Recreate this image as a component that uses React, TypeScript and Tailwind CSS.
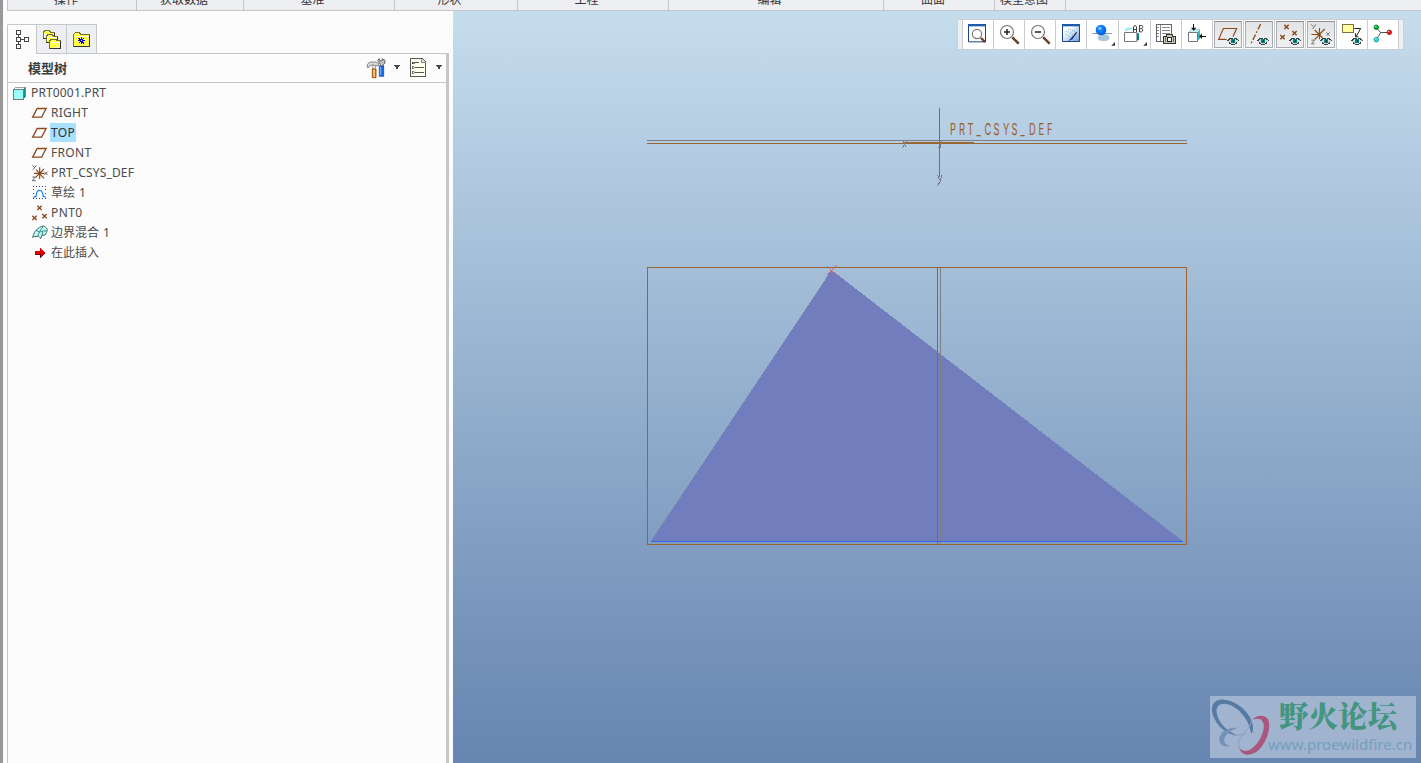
import React from 'react';

const UI = 'font-["Noto_Sans","Noto_Sans_CJK_SC",sans-serif]';

type IconProps = { box: string; w: number; h: number; children: React.ReactNode; smooth?: boolean };

function Icon({ box, w, h, children, smooth }: IconProps) {
  return (
    <svg width={w} height={h} viewBox={box} fill="none" className="block shrink-0" shapeRendering={smooth ? 'auto' : 'crispEdges'}>
      {children}
    </svg>
  );
}

const groups = [
  { label: '操作', cls: 'w-[129px] pr-[12px]' },
  { label: '获取数据', cls: 'w-[107px] pr-[12px]' },
  { label: '基准', cls: 'w-[151px] pr-[13px]' },
  { label: '形状', cls: 'w-[123px] pr-[13px]' },
  { label: '工程', cls: 'w-[151px] pr-[13px]' },
  { label: '编辑', cls: 'w-[215px] pr-[13px]' },
  { label: '曲面', cls: 'w-[111px] pr-[12px]' },
  { label: '模型意图', cls: 'w-[71px] pr-[12px]' },
];

function Ribbon() {
  return (
    <div className="ml-1 flex h-[11px] shrink-0 overflow-hidden border-b border-l border-[#c5c8cb] bg-[#eeeff2]">
      {groups.map((g) => (
        <div key={g.label} className={`${g.cls} flex h-[10px] shrink-0 justify-center overflow-hidden border-r border-[#c5c8cb]`}>
          <span className="-mt-[9px] whitespace-nowrap text-[12px] leading-[17px] text-[#333]">{g.label}</span>
        </div>
      ))}
    </div>
  );
}

function Caret() {
  return (
    <Icon box="0 0 6 4" w={6} h={4}>
      <path d="M0 0H6V1H5V2H4V4H2V2H1V1H0Z" fill="#444" />
    </Icon>
  );
}

function Folder({ x, y, w, h }: { x: number; y: number; w: number; h: number }) {
  return (
    <g>
      <path d={`M${x} ${y + h}V${y + 5}l5 -5h12l5 5h${w - 22}V${y + h}Z`} fill="#ffff45" stroke="#77713f" strokeWidth="3" />
      <path d={`M${x + 4} ${y + h - 3}V${y + 10}H${x + w - 3}`} stroke="#fff" strokeWidth="3" />
      <path d={`M${x} ${y + h}H${x + w}V${y + 7}`} stroke="#333" strokeWidth="3" />
    </g>
  );
}

function Tabs() {
  return (
    <div className="flex h-[30px] w-[442px] items-end">
      <div className="flex h-[30px] w-[29px] items-center justify-center rounded-tl-[2px] border-l border-t border-[#c5c8cb] bg-[#fcfcfc]">
        <Icon box="45 84 45 63" w={15} h={21}>
          <path d="M50 89h12v12H50zM50 110h12v12H50zM50 131h12v12H50zM73 110h12v12H73zM56 101v9M56 122v9M62 116h11" stroke="#444" strokeWidth="3" />
        </Icon>
      </div>
      <div className="flex h-[30px] w-[31px] items-center justify-center border border-[#c5c8cb] bg-[#eeeff2]">
        <Icon box="126 84 60 63" w={20} h={21}>
          <Folder x={130} y={89} w={34} h={24} />
          <Folder x={139} y={100} w={34} h={24} />
          <Folder x={149} y={114} w={33} h={28} />
          <path d="M158 132h3m3 -3h3m3 3h3m3 -3h3m-18 9h3m3 -3h3m3 3h3" stroke="#fffccc" strokeWidth="3" />
        </Icon>
      </div>
      <div className="flex h-[30px] w-[30px] items-center justify-center border-y border-r border-[#c5c8cb] bg-[#eeeff2]">
        <Icon box="216 90 57 54" w={19} h={18}>
          <Folder x={221} y={98} w={48} h={42} />
          <path d="M244 111v21M233 122h22M236 114l16 16M252 114l-16 16" stroke="#0000d0" strokeWidth="3" />
          <path d="M243 120h3v3h-3z" fill="#ffff55" />
        </Icon>
      </div>
      <div className="h-px flex-1 bg-[#c5c8cb]" />
    </div>
  );
}

function TreeHeader() {
  return (
    <div className="flex h-[30px] items-center border-b border-[#c5c8cb] pl-5 pr-[4px]">
      <span className="flex-1 pt-px text-[13px] font-bold leading-none text-[#3c3c3c]">模型树</span>
      <Icon box="378 168 63 69" w={21} h={23} smooth>
        <path d="M382 202v-9l8-7h18l8 4v7h-13l-4-2-8 1-4 6z" fill="#d8dadb" stroke="#555" strokeWidth="2" />
        <path d="M398 196h9v12h-9z" fill="#eee" stroke="#777" strokeWidth="2" />
        <path d="M397 207h11v26h-11z" fill="#f08a20" stroke="#8a3c10" strokeWidth="2.500" />
        <path d="M402 209v22" stroke="#fff0a0" strokeWidth="3" />
        <path d="M413 180l5-4 2 7 7-1-1-6 9 5v8l-5 5v8h-9v-9z" fill="#bfc2c2" stroke="#505454" strokeWidth="2.500" />
        <path d="M418 198h13v31h-13z" fill="#1765e8" stroke="#173d82" strokeWidth="2" />
        <path d="M422 200v26" stroke="#78bdff" strokeWidth="3" />
      </Icon>
      <div className="ml-[7px] mt-[-1px]"><Caret /></div>
      <div className="ml-[9px]">
        <Icon box="507 171 54 63" w={18} h={21}>
          <path d="M512 176h34l11 11v43h-45z" fill="#fffff0" stroke="#555b50" strokeWidth="3" />
          <path d="M545 176v12h12" fill="#ddd" stroke="#555b50" strokeWidth="2" />
          <path d="M526 188h12M526 203h25M526 218h25" stroke="#555" strokeWidth="3" />
          <path d="M517 186h5v5h-5zM517 200h5v5h-5zM517 215h5v5h-5z" stroke="#333" strokeWidth="2" />
        </Icon>
      </div>
      <div className="ml-[9px] mt-[-1px]"><Caret /></div>
    </div>
  );
}

const treeIcons: Record<string, React.ReactNode> = {
  plane: (
    <Icon box="93 69 54 57" w={18} h={19} smooth>
      <path d="M98 111.500h27l13.500 -26h-27z" stroke="#8c4a1c" strokeWidth="4" />
    </Icon>
  ),
  csys: (
    <Icon box="93 249 54 57" w={18} h={19} smooth>
      <path d="M119 262v35M102 280h31M108 269l24 26M132 267l-26 26" stroke="#8c4a1c" strokeWidth="3.500" />
      <path d="M97 256l6 6M109 256l-10 13M133 275l10 10M143 275l-10 10M97 291h9l-9 11h10" stroke="#666" strokeWidth="3" />
    </Icon>
  ),
  sketch: (
    <Icon box="93 309 54 57" w={18} h={19}>
      <path d="M99 319.500h42M99 355.500h42" stroke="#203a90" strokeWidth="3" strokeDasharray="3 6" />
      <path d="M100.500 327v24M136.500 327v24" stroke="#203a90" strokeWidth="3" strokeDasharray="3 9" />
      <path d="M100 352l8-3c2-24 19-24 22 0l7 3" stroke="#0878e8" strokeWidth="3.500" shapeRendering="auto" />
    </Icon>
  ),
  points: (
    <Icon box="93 369 54 57" w={18} h={19} smooth>
      <path d="M112 377l13 13M125 377l-13 13M97 407l13 13M110 407l-13 13M127 402l13 13M140 402l-13 13" stroke="#8c4a1c" strokeWidth="4" />
    </Icon>
  ),
  blend: (
    <Icon box="93 429 54 57" w={18} h={19} smooth>
      <path d="M98 472c3-11 6-18 11-22 6-5 12-11 21-12 5 1 9 5 12 10-1 6-3 12-7 17l-9 1-4 10c-3-5-6-8-10-7-5 0-10 1-14 3z" fill="#c0f8f4" stroke="#386f6f" strokeWidth="3" />
      <path d="M108 451l10 5 12-17M118 456l-5 13M119 456c8-3 15-4 22-3M128 454l-2 12" stroke="#287b7b" strokeWidth="2.500" />
    </Icon>
  ),
  insert: (
    <Icon box="93 489 54 57" w={18} h={19}>
      <path d="M105 514h15v-12l15 16-15 17v-11h-15z" fill="#e80000" />
      <path d="M105 523h15v11l15-15" stroke="#700" strokeWidth="3" />
    </Icon>
  ),
};

const tree = [
  { icon: 'plane', label: 'RIGHT', size: 'text-[12px] tracking-[0.25px]' },
  { icon: 'plane', label: 'TOP', size: 'text-[12px] tracking-[0.3px]', selected: true },
  { icon: 'plane', label: 'FRONT', size: 'text-[12px] tracking-[0.3px]' },
  { icon: 'csys', label: 'PRT_CSYS_DEF', size: 'text-[12px] tracking-[0.15px]' },
  { icon: 'sketch', label: '草绘 1', size: 'text-[12px] [word-spacing:1px]' },
  { icon: 'points', label: 'PNT0', size: 'text-[12px] tracking-[0.4px]' },
  { icon: 'blend', label: '边界混合 1', size: 'text-[12px] [word-spacing:1px]' },
  { icon: 'insert', label: '在此插入', size: 'text-[12px]' },
];

function ModelTree() {
  return (
    <div className="flex flex-col text-[#4a4a4a]">
      <div className="flex h-5 items-center pl-1">
        <Icon box="36 18 45 42" w={15} h={14}>
          <path d="M70 28l6-6v29l-6 6z" fill="#0c8f8f" stroke="#355" strokeWidth="2" />
          <path d="M40 28l7-6h29l-6 6z" fill="#e0ffff" stroke="#777" strokeWidth="2" />
          <path d="M40.500 27.500h30v30h-30z" fill="#98ffff" stroke="#777" strokeWidth="3" />
        </Icon>
        <span className="ml-1 text-[12px] leading-5 tracking-[0.15px]">PRT0001.PRT</span>
      </div>
      {tree.map((n) => (
        <div key={n.label} className="flex h-5 items-start pl-[23px]">
          {treeIcons[n.icon]}
          <span className={`${n.size} ml-px h-[19px] px-px leading-[19px] ${n.selected ? 'bg-[#a8e0ff] text-[#333]' : ''}`}>{n.label}</span>
        </div>
      ))}
    </div>
  );
}

function Eye({ x, y }: { x: number; y: number }) {
  return (
    <g transform={`translate(${x} ${y})`}>
      <path d="M-16 0l7-7h18l7 7-7 8H-9z" fill="#d5dad8" />
      <path d="M-16 0l7-7h18l7 7M-12 5l5 4H7l5-4" stroke="#3c4543" strokeWidth="3" strokeDasharray="6 1" />
      <path d="M-5-6H6V6H-5z" fill="#07817d" />
      <path d="M-1-2h4v4h-4z" fill="#033" />
    </g>
  );
}

function Magnifier({ sign }: { sign: string }) {
  return (
    <g>
      <path d="M187 82l19 19" stroke="#502818" strokeWidth="7" />
      <path d="M189 83l16 16" stroke="#a45a3a" strokeWidth="3" />
      <circle cx="171" cy="66" r="19.500" fill="#fcfcfc" stroke="#777" strokeWidth="3.5" />
      <path d={sign} stroke="#222" strokeWidth="4.5" />
    </g>
  );
}

const brown = '#8c4a1c';

const tools: { id: string; cls: string; on?: boolean; art: React.ReactNode }[] = [
  {
    id: 'refit', cls: 'w-[31px]',
    art: (
      <Icon box="36 27 93 90" w={31} h={30} smooth>
        <path d="M55.500 43.500h51v52h-51z" fill="#fff" stroke="#184488" strokeWidth="3" />
        <path d="M54 42h54v7H54z" fill="#1d5aa8" />
        <path d="M93 84l12 12" stroke="#502818" strokeWidth="7" />
        <path d="M94 84l10 10" stroke="#a45a3a" strokeWidth="3" />
        <circle cx="81" cy="72" r="14" fill="#fff" stroke="#777" strokeWidth="3.500" />
      </Icon>
    ),
  },
  { id: 'in', cls: 'w-[31px]', art: <Icon box="129 27 93 90" w={31} h={30} smooth><Magnifier sign="M162 66h18M171 57v18" /></Icon> },
  { id: 'out', cls: 'w-[31px]', art: <Icon box="129 27 93 90" w={31} h={30} smooth><Magnifier sign="M162 66h18" /></Icon> },
  {
    id: 'repaint', cls: 'w-[31px]',
    art: (
      <Icon box="315 27 93 90" w={31} h={30} smooth>
        <defs>
          <linearGradient id="rp" x1="0" y1="0" x2="1" y2="1"><stop offset=".3" stopColor="#fff" /><stop offset="1" stopColor="#6c9ee0" /></linearGradient>
        </defs>
        <path d="M337.500 43.500h51v51h-51z" fill="url(#rp)" stroke="#184488" strokeWidth="3" />
        <path d="M336 42h54v7h-54z" fill="#1d5aa8" />
        <path d="M380 67l-14 18" stroke="#224" strokeWidth="3.500" />
        <path d="M369 78l-15 16 15-7z" fill="#112d9a" />
        <path d="M347 64c10 1 17 5 22 11M346 73c7 1 12 4 15 9M353 57c10 1 18 5 23 10" stroke="#5ab" strokeWidth="2.500" strokeDasharray="3 4" />
      </Icon>
    ),
  },
  {
    id: 'style', cls: 'w-[32px]',
    art: (
      <Icon box="408 27 96 90" w={32} h={30} smooth>
        <defs>
          <radialGradient id="ball" cx=".4" cy=".35" r=".7"><stop offset="0" stopColor="#b9e2ff" /><stop offset=".3" stopColor="#1284ff" /><stop offset="1" stopColor="#0058dd" /></radialGradient>
        </defs>
        <ellipse cx="461" cy="83" rx="18" ry="11" fill="#a9c6e0" />
        <path d="M427 70.500h59" stroke="#8898a8" strokeWidth="3" />
        <circle cx="453" cy="60" r="16" fill="url(#ball)" />
        <path d="M495 96v11h-11z" fill="#333" />
      </Icon>
    ),
  },
  {
    id: 'saved', cls: 'w-[32px]',
    art: (
      <Icon box="504 27 96 90" w={32} h={30} smooth>
        <path d="M526 63l7-7h14" stroke="#7ee" strokeWidth="5" />
        <path d="M523.500 94.500V67.500h37v27z" fill="#fff" stroke="#777" strokeWidth="3" />
        <path d="M564 91V70" stroke="#088" strokeWidth="6" />
        <path d="M550.500 66V51l3-4h3l3 4v15M550 58.500h9M568.500 46v20M568 46.500h8l2 3v4l-3 2.500h-6M575 56l3 3v4l-3 2.500h-7" stroke="#333" strokeWidth="2.800" />
        <path d="M591 96v11h-11z" fill="#333" />
      </Icon>
    ),
  },
  {
    id: 'views', cls: 'w-[31px]',
    art: (
      <Icon box="600 27 93 90" w={31} h={30}>
        <path d="M619.500 43.500h45v51h-45z" fill="#fff" stroke="#666" strokeWidth="3" />
        <path d="M631.500 44v50M636 52.500h24M636 61.500h24M636 70.500h24M621 52.500h7M621 61.500h7M621 70.500h7M621 79.500h7" stroke="#888" strokeWidth="3" />
        <path d="M640.500 79.500h9v-6h18v6h9v21h-36z" fill="#ccc7b8" stroke="#333" strokeWidth="3" />
        <path d="M652.500 82.500h12v12h-12z" fill="#fff" stroke="#222" strokeWidth="3" />
        <path d="M646.500 82v15M670.500 82v15" stroke="#776f60" strokeWidth="3" />
      </Icon>
    ),
  },
  {
    id: 'normal', cls: 'w-[31px]',
    art: (
      <Icon box="3 27 93 90" w={31} h={30} smooth>
        <path d="M25 68l9-9h26l-8 9z" fill="#c4f8f8" stroke="#8aa" strokeWidth="2" />
        <path d="M52 69l8-10v26l-8 9z" fill="#30bcbc" />
        <path d="M25.500 67.500h27v27h-27z" fill="#fff" stroke="#777" strokeWidth="3" />
        <path d="M40.500 42v14M64 79.500h14" stroke="#111" strokeWidth="3" />
        <path d="M33 53h16l-8 9zM66 71v16l-9-8z" fill="#111" />
      </Icon>
    ),
  },
  {
    id: 'planes', cls: 'w-[31px]', on: true,
    art: (
      <Icon box="96 27 93 90" w={31} h={30}>
        <path d="M140 88h-24l14-32.500h40l-11 24" stroke={brown} strokeWidth="3.500" shapeRendering="auto" />
        <Eye x={159} y={93} />
      </Icon>
    ),
  },
  {
    id: 'axes', cls: 'w-[31px]', on: true,
    art: (
      <Icon box="189 27 93 90" w={31} h={30}>
        <path d="M242 42l-29 59" stroke={brown} strokeWidth="4" strokeDasharray="18 6 5 6" shapeRendering="auto" />
        <Eye x={249} y={93} />
      </Icon>
    ),
  },
  {
    id: 'points', cls: 'w-[31px]', on: true,
    art: (
      <Icon box="282 27 93 90" w={31} h={30}>
        <path d="M313 44l13 13M326 44l-13 13M301 75l13 13M314 75l-13 13M337 63l13 13M350 63l-13 13" stroke={brown} strokeWidth="4.500" shapeRendering="auto" />
        <Eye x={345} y={93} />
      </Icon>
    ),
  },
  {
    id: 'csys', cls: 'w-[31px]', on: true,
    art: (
      <Icon box="375 27 93 90" w={31} h={30}>
        <path d="M418.500 54v34M394 73.500h28M404 60l24 24M434 57l-30 32" stroke={brown} strokeWidth="3.500" shapeRendering="auto" />
        <path d="M394 43l6 7M407 43l-9 14M439 67l10 10M449 67l-10 10M394 90.500h10l-10 11h10" stroke="#777" strokeWidth="3" shapeRendering="auto" />
        <Eye x={438} y={93} />
      </Icon>
    ),
  },
  {
    id: 'notes', cls: 'w-[31px]',
    art: (
      <Icon box="468 27 93 90" w={31} h={30}>
        <path d="M487.500 43.500h33v24h-33z" fill="#ffffa0" stroke="#77753c" strokeWidth="3" />
        <path d="M523 55.500h19l-14 25M526.500 70v10.500h9" stroke="#222" strokeWidth="3" shapeRendering="auto" />
        <Eye x={531} y={93} />
      </Icon>
    ),
  },
  {
    id: 'spin', cls: 'w-[31px]',
    art: (
      <Icon box="561 27 93 90" w={31} h={30} smooth>
        <path d="M590 54l12 14-12 19M602 67.500h26" stroke="#555" strokeWidth="3" />
        <circle cx="589" cy="52" r="7" fill="#00b512" stroke="#064" strokeWidth="2" />
        <circle cx="628" cy="67" r="7" fill="#f01818" stroke="#711" strokeWidth="2" />
        <circle cx="589" cy="89" r="7" fill="#20dce0" stroke="#177" strokeWidth="2" />
        <path d="M586 48h3v3h-3zM625 63h3v3h-3zM586 85h3v3h-3z" fill="#fff" />
      </Icon>
    ),
  },
];

function Toolbar() {
  return (
    <div className="absolute left-[504px] top-[8px] flex h-[31px] border border-[#cbd0d5] bg-[#eeeff2] pl-1 pr-1">
      {tools.map((t) => (
        <div key={t.id} className={`${t.cls} relative flex h-[29px] shrink-0 items-start overflow-hidden border-l border-[#c9cdd1] bg-white last:w-[32px] last:border-r`}>
          {t.on && <div className="absolute inset-x-px bottom-px top-px border border-[#aaadb1] border-t-[#8c8f92] bg-gradient-to-b from-[#e2e3e5] to-[#f0f1f3]" />}
          <div className="relative -ml-px -mt-px">{t.art}</div>
        </div>
      ))}
    </div>
  );
}

const LABEL_SCALE = 0.58;
const labelStarts = [950, 959, 967.5, 976.5, 984.5, 993.5, 1003, 1011.5, 1020.5, 1029, 1038.5, 1047];
const labelX = labelStarts.map((x) => ((x - 950) / LABEL_SCALE).toFixed(2)).join(' ');

function Scene() {
  return (
    <svg className="block" width="968" height="752" viewBox="453 11 968 752" shapeRendering="crispEdges" fill="none">
      <path d="M831.500 270L1184 542H650.500Z" fill="#727dbd" />
      <path d="M647 140.500H1187" stroke="#7b7f8a" />
      <path d="M647 143.500H1187" stroke="#996633" />
      <path d="M904 143H974" stroke="#996633" strokeWidth="2" />
      <path d="M939.500 108V177" stroke="#996633" />
      <path d="M903 141l3 6M906.500 141l-4 7M941.500 141l-1 6-3 0M937.500 175l2 5M941.500 175l-1 6-3 5" stroke="#74788a" />
      <path d="M937.500 267V544" stroke="#996633" />
      <path d="M940.500 267V544" stroke="#808080" />
      <path d="M651 541.500H1183" stroke="#3366ee" />
      <path d="M647.500 267.500H1186.500V544.500H647.500Z" stroke="#996633" />
      <path d="M827 266l10 10M837 265l-10 10" stroke="#d05f66" />
      <text
        transform={`translate(950 134.500) scale(${LABEL_SCALE} 1)`}
        x={labelX}
        fontFamily="Inter, Roboto, sans-serif"
        fontWeight="400"
        fontSize="16"
        fill="#9c5c28"
      >
        PRT_CSYS_DEF
      </text>
    </svg>
  );
}

function Watermark() {
  return (
    <div className="absolute bottom-[5px] right-[5px] flex h-[62px] w-[206px] bg-[#a0b3cf]">
      <svg className="block shrink-0" width="60" height="62" viewBox="30 33 180 186">
        <path fillRule="evenodd" fill="#557ba5" d="M158 139C168 105 124 48 72 44C44 42 30 60 38 88C48 121 79 150 112 151C84 142 56 114 51 88C46 65 56 56 75 56C112 60 146 102 152 139C154 147 157 147 158 139Z" />
        <path fill="#a9577e" d="M158 105C169 89 195 88 205 105C214 127 200 172 175 196C151 216 125 213 117 188C132 202 146 201 165 182C184 162 197 129 189 112C183 99 171 99 158 105Z" />
        <path fill="#7191b5" d="M113 129C87 124 60 141 58 160C57 179 71 188 92 183C79 181 71 174 73 162C75 149 93 134 113 129Z" />
        <path d="M100 151C133 153 148 134 155 105M117 188C112 165 121 149 140 147" stroke="#8ba0c0" strokeWidth="3" fill="none" />
      </svg>
      <div className="flex flex-col whitespace-nowrap">
        <span className='ml-[9px] mt-[4px] h-[34px] font-["Noto_Serif_CJK_SC","Noto_Sans_CJK_SC",sans-serif] text-[29.500px] font-black leading-[29px] text-[#43957f]'>野火论坛</span>
        <span className='-ml-[2px] text-[15px] leading-[20px] tracking-[0.03px] text-[#739fbd]'>www.proewildfire.cn</span>
      </div>
    </div>
  );
}

export default function App() {
  return (
    <div className={`flex h-[763px] w-[1421px] overflow-hidden bg-[#fcfcfc] ${UI}`}>
      <div className="w-[3px] shrink-0 bg-[#999]" />
      <div className="flex min-w-0 flex-1 flex-col">
        <Ribbon />
        <div className="flex min-h-0 flex-1">
          <aside className="flex w-[450px] shrink-0 flex-col pl-1 pt-[13px]">
            <Tabs />
            <div className="-mt-px w-[442px] flex-1 border-l border-r-[3px] border-l-[#c5c8cb] border-r-[#c3c7cb]">
              <TreeHeader />
              <ModelTree />
            </div>
          </aside>
          <main className="relative w-[968px] bg-gradient-to-b from-[#c6dded] to-[#6685b0]">
            <Scene />
            <Toolbar />
            <Watermark />
          </main>
        </div>
      </div>
    </div>
  );
}
